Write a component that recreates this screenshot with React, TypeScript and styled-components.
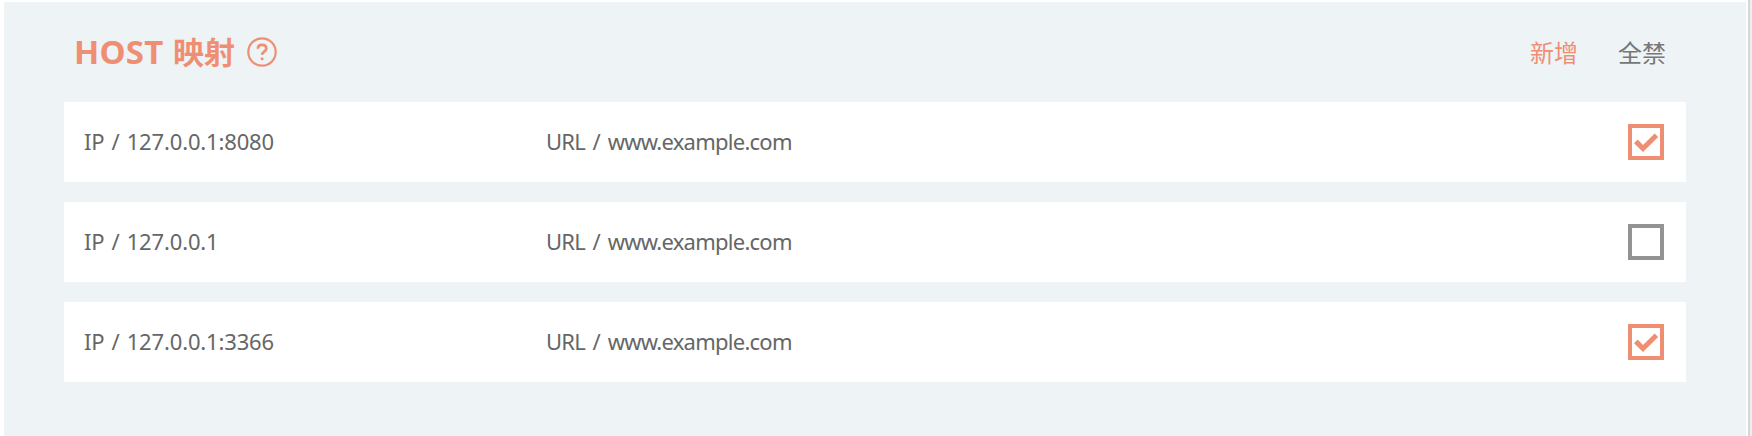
import React, { useState } from 'react';
import styled, { createGlobalStyle } from 'styled-components';

const ACCENT = '#ee8f73';

const GlobalStyle = createGlobalStyle`
  * { box-sizing: border-box; }
  body { margin: 0; background: #fff; overflow: hidden; }
`;

const Page = styled.div`
  display: flex;
  height: 436px;
  padding: 2px 0 0 4px;
  background: #fff;
  font-family: "Noto Sans", "Noto Sans CJK SC", sans-serif;
`;

const Panel = styled.main`
  flex: 1;
  padding: 0 60px;
  background: #eef3f6;
`;

const WindowEdge = styled.div`
  width: 4px;
  margin: -2px 0 0 2px;
  background: #eee;
  border-left: 2px solid #d6d6d6;
`;

const Header = styled.header`
  display: flex;
  align-items: center;
  height: 100px;
  padding: 0 20px 0 10px;
`;

const Title = styled.h1`
  display: flex;
  align-items: center;
  margin: 0;
  color: ${ACCENT};
  font-size: 33px;
  line-height: 40px;
  font-weight: 700;
  white-space: pre;
`;

const Latin = styled.span`
  width: 99px;
  letter-spacing: 0.2px;
`;

const Han = styled.span`
  width: 63px;
  padding-bottom: 2px;
  font-family: "Noto Sans CJK SC", sans-serif;
  font-size: 31px;
`;

const HelpIcon = styled.svg`
  display: block;
  margin-left: 11px;
`;

const Actions = styled.nav`
  display: flex;
  gap: 40px;
  margin-left: auto;
`;

const Action = styled.button<{ $primary?: boolean }>`
  padding: 0;
  border: 0;
  background: none;
  color: ${(p) => (p.$primary ? ACCENT : '#777')};
  font: 24px/36px "Noto Sans CJK SC", sans-serif;
  cursor: pointer;
`;

const Rows = styled.div`
  display: flex;
  flex-direction: column;
  gap: 20px;
`;

const Row = styled.div`
  display: flex;
  align-items: center;
  height: 80px;
  padding: 0 22px 0 20px;
  background: #fff;
  color: #666;
  font-size: 22px;
  line-height: 32px;
`;

const Address = styled.span`
  width: 462px;
  padding-bottom: 2px;
  letter-spacing: -0.15px;
  word-spacing: 1.5px;
`;

const Url = styled.span`
  flex: 1;
  padding-bottom: 2px;
  letter-spacing: -0.75px;
  word-spacing: 2.6px;
`;

const Checkbox = styled.button<{ $checked: boolean }>`
  width: 36px;
  height: 36px;
  padding: 0;
  border: 4px solid ${(p) => (p.$checked ? ACCENT : '#939393')};
  background: #fff;
  cursor: pointer;
`;

const Check = styled.svg`
  display: block;
`;

const hosts = [
  { ip: '127.0.0.1:8080', url: 'www.example.com', enabled: true },
  { ip: '127.0.0.1', url: 'www.example.com', enabled: false },
  { ip: '127.0.0.1:3366', url: 'www.example.com', enabled: true },
];

export default function App() {
  const [enabled, setEnabled] = useState(hosts.map((h) => h.enabled));
  const toggle = (index: number) =>
    setEnabled((prev) => prev.map((v, i) => (i === index ? !v : v)));

  return (
    <>
      <GlobalStyle />
      <Page>
        <Panel>
          <Header>
            <Title>
              <Latin>HOST </Latin>
              <Han>映射</Han>
              <HelpIcon width="30" height="30" viewBox="0 0 30 30" fill="none" stroke={ACCENT}>
                <circle cx="15" cy="15" r="13.7" strokeWidth="2.2" />
                <path d="M10.9 11.8C10.9 9.2 12.5 7.9 15 7.9s4.3 1.4 4.3 3.6c0 3-4.1 3.2-4.1 6.2" strokeWidth="2.7" />
                <circle cx="15.1" cy="21.7" r="1.5" fill={ACCENT} stroke="none" />
              </HelpIcon>
            </Title>
            <Actions>
              <Action $primary>新增</Action>
              <Action onClick={() => setEnabled(hosts.map(() => false))}>全禁</Action>
            </Actions>
          </Header>
          <Rows>
            {hosts.map((host, i) => (
              <Row key={i}>
                <Address>IP / {host.ip}</Address>
                <Url>URL / {host.url}</Url>
                <Checkbox $checked={enabled[i]} onClick={() => toggle(i)}>
                  {enabled[i] && (
                    <Check width="28" height="28" viewBox="0 0 28 28">
                      <path d="M3.8 13.4L11 20.5L24.4 7.2" fill="none" stroke={ACCENT} strokeWidth="5" />
                    </Check>
                  )}
                </Checkbox>
              </Row>
            ))}
          </Rows>
        </Panel>
        <WindowEdge />
      </Page>
    </>
  );
}
